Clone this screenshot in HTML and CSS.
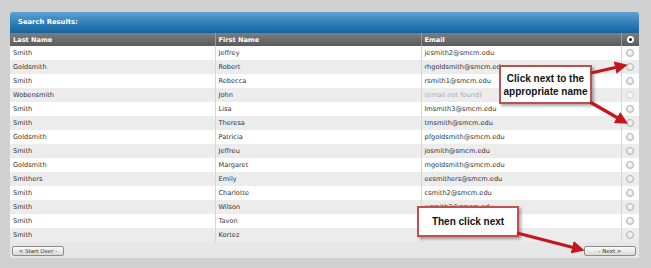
FILE: index.html
```html
<!DOCTYPE html>
<html lang="en">
<head>
<meta charset="UTF-8" />
<title>Search Results</title>
<link rel="stylesheet" href="styles.css">
</head>
<body>

<div id="stage">

  <div id="panel">
    <div class="panel-title">Search Results:</div>

    <table class="results">
      <colgroup>
        <col class="col-last" />
        <col class="col-first" />
        <col class="col-email" />
        <col class="col-pick" />
      </colgroup>
      <thead>
        <tr>
          <th>Last Name</th>
          <th>First Name</th>
          <th>Email</th>
          <th class="pick"><span class="radio on"></span></th>
        </tr>
      </thead>
      <tbody>
        <tr><td>Smith</td><td>Jeffrey</td><td>jesmith2@smcm.edu</td><td class="pick"><span class="radio"></span></td></tr>
        <tr><td>Goldsmith</td><td>Robert</td><td>rhgoldsmith@smcm.edu</td><td class="pick"><span class="radio"></span></td></tr>
        <tr><td>Smith</td><td>Rebecca</td><td>rsmith1@smcm.edu</td><td class="pick"><span class="radio"></span></td></tr>
        <tr><td>Wobensmith</td><td>John</td><td class="missing">(email not found)</td><td class="pick"><span class="radio off"></span></td></tr>
        <tr><td>Smith</td><td>Lisa</td><td>lmsmith3@smcm.edu</td><td class="pick"><span class="radio"></span></td></tr>
        <tr><td>Smith</td><td>Theresa</td><td>tmsmith@smcm.edu</td><td class="pick"><span class="radio"></span></td></tr>
        <tr><td>Goldsmith</td><td>Patricia</td><td>pfgoldsmith@smcm.edu</td><td class="pick"><span class="radio"></span></td></tr>
        <tr><td>Smith</td><td>Jeffreu</td><td>josmith@smcm.edu</td><td class="pick"><span class="radio"></span></td></tr>
        <tr><td>Goldsmith</td><td>Margaret</td><td>mgoldsmith@smcm.edu</td><td class="pick"><span class="radio"></span></td></tr>
        <tr><td>Smithers</td><td>Emily</td><td>eesmithers@smcm.edu</td><td class="pick"><span class="radio"></span></td></tr>
        <tr><td>Smith</td><td>Charlotte</td><td>csmith2@smcm.edu</td><td class="pick"><span class="radio"></span></td></tr>
        <tr><td>Smith</td><td>Wilson</td><td>wsmith3@smcm.edu</td><td class="pick"><span class="radio"></span></td></tr>
        <tr><td>Smith</td><td>Tavon</td><td></td><td class="pick"><span class="radio"></span></td></tr>
        <tr><td>Smith</td><td>Kortez</td><td></td><td class="pick"><span class="radio"></span></td></tr>
      </tbody>
    </table>

    <div class="panel-footer">
      <button class="btn">&lt; Start Over -</button>
      <button class="btn">- Next &gt;</button>
    </div>
  </div>

  <!-- annotations drawn over the screenshot -->
  <div class="callout callout-pick">Click next to the<br>appropriate name</div>
  <div class="callout callout-next">Then click next</div>

  <svg class="arrows" width="651" height="268" viewBox="0 0 651 268">
    <defs>
      <marker id="head" markerWidth="4" markerHeight="4" refX="2.2" refY="2" orient="auto" markerUnits="strokeWidth">
        <path d="M0,0 L4,2 L0,4 Z" fill="#c4161c" />
      </marker>
    </defs>
    <line x1="591" y1="73" x2="622" y2="66" stroke="#c4161c" stroke-width="3.2" marker-end="url(#head)" />
    <line x1="590" y1="102" x2="623" y2="121" stroke="#c4161c" stroke-width="3.2" marker-end="url(#head)" />
    <line x1="517" y1="233" x2="579" y2="249" stroke="#c4161c" stroke-width="3.2" marker-end="url(#head)" />
  </svg>

</div>

</body>
</html>
```

FILE: styles.css
```css
body {
  margin: 0;
  background: #d0d0d0;
  font-family: 'DejaVu Sans', Verdana, sans-serif;
}

#stage {
  position: relative;
  width: 651px;
  height: 268px;
  overflow: hidden;
}

#panel {
  margin: 12px 0 0 10px;
  width: 629px;
}

.panel-title {
  height: 21px;
  line-height: 20px;
  padding-left: 8px;
  border-radius: 3px 3px 0 0;
  background: linear-gradient(#5ea2d0, #2e7db8 55%, #15639f);
  color: white;
  font-weight: bold;
  font-size: 6.8px;
}

.results {
  width: 629px;
  border-collapse: collapse;
  table-layout: fixed;
  font-size: 6.6px;
}

.col-last { width: 205px; }
.col-first { width: 206px; }
.col-email { width: 200px; }
.col-pick { width: 18px; }

.results th {
  height: 13px;
  padding: 0 0 0 3px;
  text-align: left;
  color: white;
  font-weight: bold;
  background: linear-gradient(#7d7d7d, #5b5b5b);
  border-left: 1px solid #9a9a9a;
}

.results th:first-child,
.results td:first-child {
  border-left: none;
}

.results td {
  height: 14px;
  padding: 0 0 0 3px;
  color: #333;
  border-left: 1px solid #d6d6d6;
  white-space: nowrap;
  overflow: hidden;
}

.results tbody tr:nth-child(even) td {
  background: #ececec;
}

.results tbody tr:nth-child(odd) td {
  background: #ffffff;
}

.results td.missing {
  color: #a8a8a8;
}

.results .pick {
  padding: 0;
  text-align: center;
}

.radio {
  display: inline-block;
  width: 6px;
  height: 6px;
  border-radius: 50%;
  border: 1px solid #b4b4b4;
  background: radial-gradient(circle at 50% 40%, #fafafa, #d8d8d8);
  vertical-align: middle;
}

.radio.on {
  width: 3px;
  height: 3px;
  border: 2px solid #ffffff;
  background: #111;
}

.radio.off {
  border-color: #d2d2d2;
  background: #f4f4f4;
}

.panel-footer {
  height: 16px;
  background: #e7e7e7;
  display: flex;
  justify-content: space-between;
  align-items: center;
  padding: 0 3px 0 2px;
}

.btn {
  width: 52px;
  height: 10px;
  padding: 0;
  margin-top: 2px;
  font-family: 'DejaVu Sans', Verdana, sans-serif;
  font-size: 5.5px;
  color: #333;
  background: linear-gradient(#fbfbfb, #d9d9d9);
  border: 1px solid #8c8c8c;
  border-radius: 2px;
}

/* callouts */
.callout {
  position: absolute;
  box-sizing: border-box;
  display: flex;
  align-items: center;
  justify-content: center;
  text-align: center;
  background: white;
  border: 2px solid #c0504d;
  box-shadow: 2px 2px 3px rgba(0,0,0,0.35);
  font-family: 'Liberation Sans', Arial, sans-serif;
  font-weight: bold;
  font-size: 10px;
  line-height: 13px;
  color: #111;
}

.callout-pick {
  left: 499px;
  top: 65px;
  width: 93px;
  height: 39px;
}

.callout-next {
  left: 417px;
  top: 206px;
  width: 102px;
  height: 31px;
}

.arrows {
  position: absolute;
  left: 0;
  top: 0;
  pointer-events: none;
}
```
